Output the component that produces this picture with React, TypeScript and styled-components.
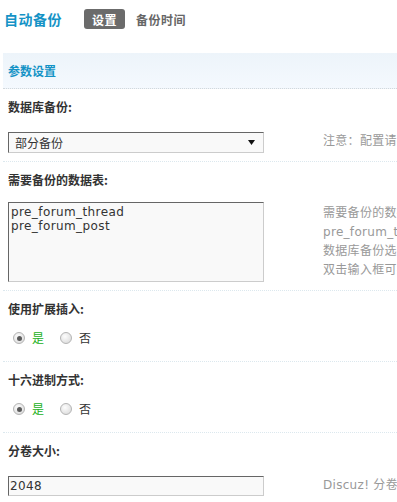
import { FC } from 'react';
import styled, { createGlobalStyle } from 'styled-components';

const GlobalStyle = createGlobalStyle`
  html, body {
    margin: 0;
    padding: 0;
    overflow: hidden;
    background: #fff;
  }
  body {
    font-family: "DejaVu Sans", "Noto Sans CJK SC", sans-serif;
    font-size: 12px;
    color: #333;
  }
`;

const Page = styled.div`
  width: 397px;
  height: 502px;
  overflow: hidden;
`;

const TitleBar = styled.div`
  display: flex;
  align-items: center;
  height: 20px;
  padding: 9px 0 0 4px;
  margin-bottom: 24px;
`;

const Title = styled.h3`
  margin: 0 22px 0 0;
  font-size: 14px;
  font-weight: 700;
  letter-spacing: 0.5px;
  color: #1593c6;
  font-family: "Noto Sans CJK SC", sans-serif;
`;

const Tab = styled.span<{ $active?: boolean }>`
  display: inline-flex;
  align-items: center;
  height: 20px;
  padding: 0 8px;
  margin-right: 3px;
  border-radius: 3px;
  font-weight: 700;
  letter-spacing: 0.5px;
  font-family: "Noto Sans CJK SC", sans-serif;
  color: ${(p) => (p.$active ? '#fff' : '#666')};
  background: ${(p) => (p.$active ? '#6b6b6b' : 'transparent')};
`;

const Form = styled.div`
  margin-left: 3px;
`;

const SectionBar = styled.div`
  height: 35px;
  line-height: 35px;
  padding-left: 5px;
  background: linear-gradient(#edf4fa, #f4f9fe);
  border-bottom: 1px dotted #d2d8dc;
  color: #1593c6;
  font-weight: 700;
  font-family: "Noto Sans CJK SC", sans-serif;
`;

const Block = styled.div`
  border-bottom: 1px dotted #dce8ee;
`;

const Label = styled.div`
  height: 28px;
  padding: 10px 0 0 5px;
  line-height: 16px;
  font-weight: 700;
  color: #333;
  font-family: "Noto Sans CJK SC", sans-serif;
`;

const ControlRow = styled.div<{ $top?: number }>`
  display: grid;
  grid-template-columns: 320px 1fr;
  padding: ${(p) => p.$top ?? 5}px 0 8px;
`;

const Cell = styled.div`
  padding-left: 5px;
`;

const Tips = styled.div<{ $pad?: number }>`
  padding-top: ${(p) => p.$pad ?? 0}px;
  line-height: 19px;
  letter-spacing: 0.3px;
  color: #999;
  white-space: nowrap;
`;

const SelectBox = styled.div`
  box-sizing: border-box;
  width: 256px;
  height: 21px;
  display: flex;
  align-items: center;
  justify-content: space-between;
  padding: 0 8px 0 6px;
  border: 1px solid;
  border-color: #666 #ccc #ccc #666;
  background: #f9f9f9;
  font-family: "Noto Sans CJK SC", sans-serif;
  color: #333;
`;

const TextArea = styled.textarea`
  box-sizing: border-box;
  display: block;
  width: 256px;
  height: 80px;
  margin: 0;
  padding: 2px 2px;
  border: 1px solid;
  border-color: #666 #ccc #ccc #666;
  background: #f9f9f9;
  font-family: "DejaVu Sans", sans-serif;
  font-size: 12px;
  letter-spacing: 0.4px;
  line-height: 14px;
  color: #333;
  resize: none;
  outline: none;
`;

const TextInput = styled.input`
  box-sizing: border-box;
  display: block;
  width: 256px;
  height: 20px;
  margin: 0;
  padding: 0 1px;
  border: 1px solid;
  border-color: #666 #ccc #ccc #666;
  background: #f9f9f9;
  font-family: "DejaVu Sans", sans-serif;
  font-size: 12px;
  letter-spacing: 0.4px;
  color: #333;
  outline: none;
`;

const RadioGroup = styled.div`
  display: flex;
  align-items: flex-start;
  gap: 11px;
  height: 21px;
`;

const RadioItem = styled.label<{ $checked?: boolean }>`
  display: flex;
  align-items: center;
  height: 12px;
  line-height: 12px;
  font-family: "Noto Sans CJK SC", sans-serif;
  color: ${(p) => (p.$checked ? '#22b022' : '#333')};
`;

const RadioDot = styled.span<{ $checked?: boolean }>`
  box-sizing: border-box;
  position: relative;
  width: 12px;
  height: 12px;
  margin: 0 7px 0 5px;
  border-radius: 50%;
  border: 1px solid #b4b4b4;
  background: radial-gradient(circle at 40% 35%, #fdfdfd, #d6d6d6);
  &::after {
    content: '';
    display: ${(p) => (p.$checked ? 'block' : 'none')};
    position: absolute;
    left: 2.5px;
    top: 2.5px;
    width: 5px;
    height: 5px;
    border-radius: 50%;
    background: #5a5a5a;
  }
`;

const Radios: FC<{ value: boolean }> = ({ value }) => (
  <RadioGroup>
    <RadioItem $checked={value}>
      <RadioDot $checked={value} />是
    </RadioItem>
    <RadioItem $checked={!value}>
      <RadioDot $checked={!value} />否
    </RadioItem>
  </RadioGroup>
);

const App: FC = () => {
  return (
    <Page>
      <GlobalStyle />
      <TitleBar>
        <Title>自动备份</Title>
        <Tab $active>设置</Tab>
        <Tab>备份时间</Tab>
      </TitleBar>

      <Form>
        <SectionBar>参数设置</SectionBar>

        <Block>
          <Label>数据库备份:</Label>
          <ControlRow>
            <Cell>
              <SelectBox>
                部分备份
                <svg width="7" height="5" viewBox="0 0 7 5">
                  <path d="M0 0h7L3.5 5z" fill="#111" />
                </svg>
              </SelectBox>
            </Cell>
            <Tips>注意：配置请在提交后才会生效</Tips>
          </ControlRow>
        </Block>

        <Block>
          <Label>需要备份的数据表:</Label>
          <ControlRow $top={2}>
            <Cell>
              <TextArea readOnly defaultValue={'pre_forum_thread\npre_forum_post'} />
            </Cell>
            <Tips $pad={2}>
              需要备份的数据表，每行一个
              <br />
              pre_forum_thread 等完整表名
              <br />
              数据库备份选择“部分备份”时有效
              <br />
              双击输入框可扩大/缩小
            </Tips>
          </ControlRow>
        </Block>

        <Block>
          <Label>使用扩展插入:</Label>
          <ControlRow $top={3}>
            <Cell>
              <Radios value={true} />
            </Cell>
            <Tips />
          </ControlRow>
        </Block>

        <Block>
          <Label>十六进制方式:</Label>
          <ControlRow $top={3}>
            <Cell>
              <Radios value={true} />
            </Cell>
            <Tips />
          </ControlRow>
        </Block>

        <Block>
          <Label>分卷大小:</Label>
          <ControlRow>
            <Cell>
              <TextInput readOnly defaultValue="2048" />
            </Cell>
            <Tips>Discuz! 分卷备份文件长度限制(kb)</Tips>
          </ControlRow>
        </Block>
      </Form>
    </Page>
  );
};

export default App;
